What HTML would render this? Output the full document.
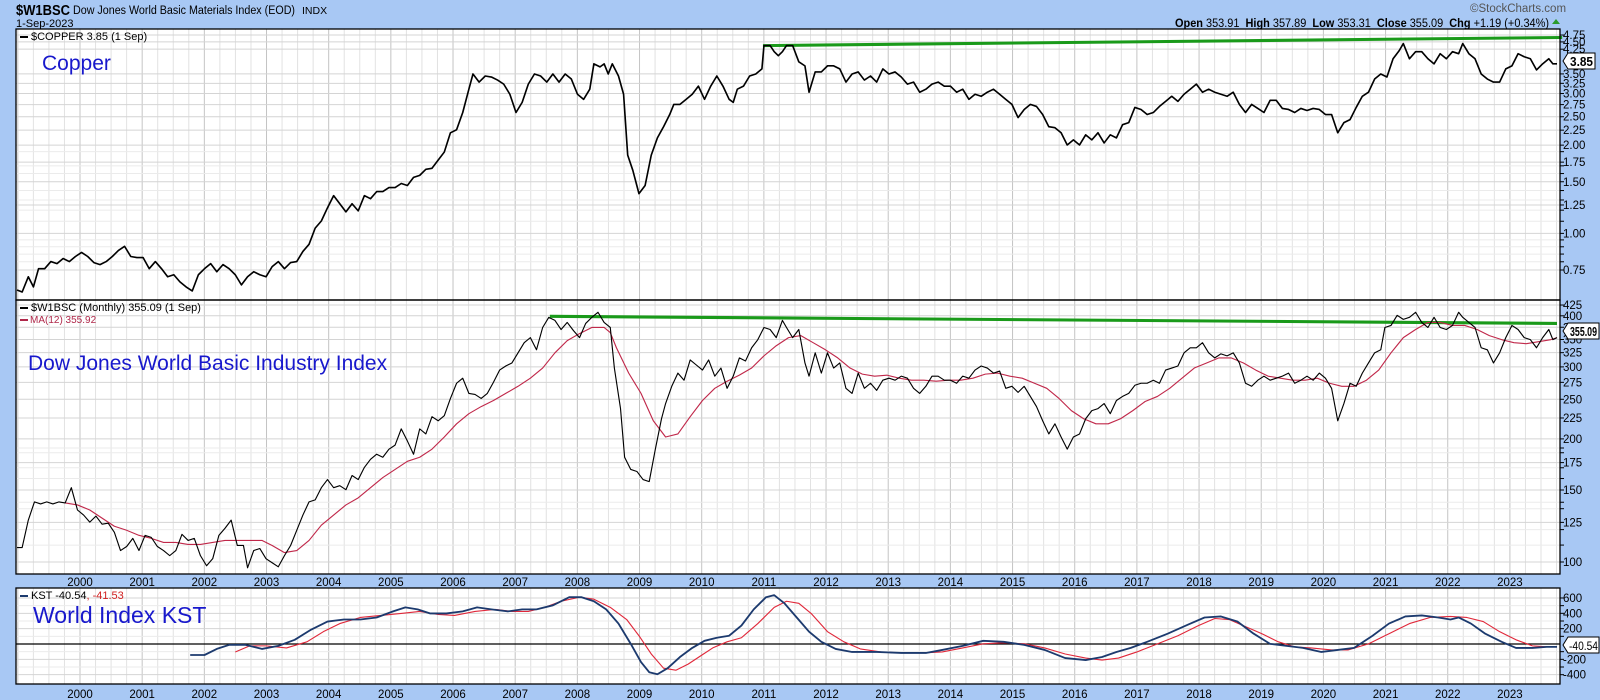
<!DOCTYPE html>
<html><head><meta charset="utf-8"><style>
html,body{margin:0;padding:0;background:#a8c8f4;width:1600px;height:700px;overflow:hidden}
svg{display:block}
text{font-family:"Liberation Sans",sans-serif}
</style></head><body>
<svg id="s" width="1600" height="700" xmlns="http://www.w3.org/2000/svg">
<rect x="0" y="0" width="1600" height="700" fill="#a8c8f4"/>
<g id="panels"></g>
<g id="grid"></g>
<g id="data" transform="matrix(1.0246,0,0,1.014,-0.39,3)" fill="none" stroke-linejoin="round">
<polyline stroke="#1a9a1a" stroke-width="3" points="745,42 1525,34"/>
<polyline stroke="#1a9a1a" stroke-width="3" points="537,309 1520,316"/>
<polyline id="cu" stroke="#000" stroke-width="1.6" points="17,283 22,285 28,270 33,280 38,262 44,262 50,255 56,257 62,252 68,255 74,250 80,246 86,250 92,256 98,258 104,255 110,250 116,244 122,240 128,250 134,251 140,251 146,262 152,255 158,262 164,270 170,268 176,275 182,280 188,284 194,268 200,262 206,257 212,265 218,258 224,262 230,268 236,278 242,270 248,265 254,268 260,270 266,260 272,255 278,262 284,256 290,255 296,245 302,238 308,222 314,215 320,202 326,190 332,198 338,206 344,198 350,205 356,190 362,193 368,186 374,186 380,182 386,182 392,178 398,180 404,172 410,170 416,164 422,163 428,155 434,147 440,128 446,125 452,108 458,85 462,70 468,78 474,72 480,73 486,76 492,80 498,90 504,108 510,98 516,80 522,70 528,72 534,78 540,70 546,78 552,70 558,75 564,90 570,95 576,85 580,60 586,63 590,60 594,70 598,60 604,72 609,90 613,150 618,165 624,188 630,180 636,150 642,133 648,122 654,110 658,100 664,100 670,95 676,90 682,82 688,95 694,82 700,72 706,82 712,95 716,98 720,85 726,82 732,72 738,70 744,65 746,42 752,42 756,48 760,52 764,48 768,42 774,42 780,58 786,62 790,88 796,68 802,68 808,62 814,62 820,65 826,78 832,70 838,68 844,76 850,72 856,78 862,65 868,70 874,68 880,73 886,80 892,78 898,88 904,85 910,80 916,78 922,82 928,82 934,88 940,85 946,95 952,90 958,92 964,88 970,85 976,90 982,95 988,100 994,113 1000,105 1006,100 1012,102 1018,110 1024,122 1030,123 1036,128 1042,140 1048,135 1054,140 1060,130 1066,135 1072,128 1078,138 1084,130 1090,133 1096,120 1102,118 1108,103 1114,105 1120,110 1126,108 1132,102 1138,97 1144,92 1150,97 1156,90 1162,85 1168,80 1174,88 1180,85 1186,88 1192,90 1198,92 1204,88 1210,100 1216,108 1222,100 1228,104 1234,108 1240,96 1246,96 1252,104 1258,105 1264,108 1270,104 1276,106 1282,104 1288,105 1294,110 1300,110 1306,128 1312,118 1318,115 1324,103 1330,92 1336,88 1342,75 1348,70 1354,73 1360,55 1366,47 1370,40 1376,55 1382,48 1388,48 1394,55 1400,60 1406,50 1412,55 1418,48 1424,50 1428,40 1434,50 1440,55 1446,70 1452,75 1458,78 1464,78 1470,65 1476,62 1482,50 1488,53 1494,55 1500,66 1506,60 1512,55 1516,60 1520,60"/>
<polyline stroke="#c0284a" stroke-width="1.1" points="64,493 76,495 88,500 100,508 112,516 124,520 136,525 148,528 160,532 172,532 184,534 196,534 208,532 220,530 232,530 244,530 256,530 266,535 278,542 290,540 302,530 314,515 326,505 338,495 350,488 362,478 374,468 386,460 398,452 410,448 422,440 434,428 446,415 458,405 470,398 482,392 494,385 506,378 518,370 530,360 542,345 554,333 566,326 578,320 590,320 596,325 602,340 614,365 626,385 638,412 650,428 662,425 674,408 686,392 698,380 710,373 722,367 734,360 746,348 758,338 770,330 782,328 794,335 806,342 818,350 830,360 842,366 854,368 866,367 878,370 890,372 902,372 914,373 926,372 938,372 950,370 962,366 974,365 986,368 998,370 1010,375 1022,380 1034,390 1046,402 1058,410 1070,415 1082,415 1094,410 1106,402 1118,393 1130,388 1142,380 1154,370 1166,360 1178,355 1190,350 1202,350 1214,355 1226,362 1238,368 1250,370 1262,372 1274,372 1286,370 1298,375 1310,378 1322,378 1334,372 1346,362 1358,345 1370,330 1382,322 1394,315 1406,315 1418,318 1430,318 1442,322 1454,328 1466,332 1478,335 1490,336 1502,334 1514,332 1520,330"/>
<polyline stroke="#000" stroke-width="1.1" points="17,537 22,537 28,510 34,492 40,494 46,492 52,494 58,492 64,493 70,478 76,500 82,505 88,512 94,506 100,514 106,513 112,522 118,540 124,536 130,528 136,540 142,525 148,527 154,536 160,540 166,545 172,540 178,524 184,530 190,528 196,545 202,555 208,548 214,525 220,518 226,510 232,535 238,535 242,557 248,540 254,538 260,548 266,552 272,556 278,545 284,535 290,520 296,505 302,492 308,490 314,478 320,470 326,478 332,476 338,480 344,466 350,470 356,458 362,450 368,445 374,448 380,440 386,436 392,420 398,432 404,445 410,420 416,425 422,408 428,412 434,407 440,390 446,375 452,370 458,385 464,386 470,390 476,385 482,374 488,362 494,358 500,355 506,345 512,335 518,330 524,342 530,320 536,310 542,313 548,322 554,315 560,323 566,330 572,316 578,310 584,305 590,315 596,320 600,360 606,400 610,448 616,460 622,462 628,470 634,472 640,440 646,410 650,395 656,378 662,365 668,372 674,352 680,357 686,362 692,352 698,368 704,360 710,380 716,368 722,350 728,353 734,340 740,332 746,320 752,322 758,330 764,313 768,320 774,330 780,322 786,355 790,368 796,345 802,365 808,345 814,360 820,355 826,380 832,385 838,365 844,380 850,375 856,382 862,372 868,370 874,372 880,368 886,370 892,380 898,385 904,378 910,368 916,368 922,372 928,372 934,375 940,368 946,370 952,362 958,358 964,360 970,365 976,363 982,380 988,378 994,384 1000,378 1006,388 1012,398 1018,412 1024,425 1030,415 1036,428 1042,440 1048,428 1054,425 1060,410 1066,402 1072,400 1078,395 1084,405 1090,392 1096,388 1102,385 1108,377 1114,375 1120,375 1126,372 1132,375 1138,362 1144,360 1150,358 1156,345 1162,340 1168,340 1174,335 1180,345 1186,350 1192,346 1198,348 1204,345 1210,355 1216,375 1222,378 1228,372 1234,368 1240,372 1246,370 1252,368 1258,365 1264,375 1270,372 1276,368 1282,372 1288,365 1294,370 1300,380 1306,412 1312,395 1318,375 1324,378 1330,365 1336,355 1342,345 1348,342 1352,320 1358,318 1364,308 1370,312 1376,310 1382,305 1388,315 1394,320 1400,310 1406,320 1412,322 1418,318 1424,305 1428,310 1434,315 1440,320 1446,340 1452,342 1458,355 1464,345 1470,330 1476,318 1482,322 1488,330 1494,332 1500,340 1506,330 1512,322 1516,332 1520,330"/>
<polyline stroke="#e0283a" stroke-width="1.1" points="230,640 244,634 260,634 280,636 300,630 316,620 332,612 352,606 372,604 392,602 410,600 428,603 444,604 464,600 484,598 500,600 516,600 532,596 548,590 566,586 580,588 596,596 612,608 624,624 636,642 648,656 660,658 672,652 684,644 696,636 710,630 724,626 740,612 756,596 768,590 780,592 792,602 808,620 824,630 840,637 860,640 880,641 900,641 920,640 940,636 960,632 980,631 1000,632 1020,636 1040,642 1060,646 1076,648 1092,646 1110,640 1130,632 1150,624 1170,614 1186,607 1200,608 1216,615 1232,622 1248,630 1264,635 1280,636 1300,638 1316,638 1336,632 1356,622 1376,612 1396,606 1416,605 1432,606 1448,610 1464,620 1480,628 1496,634 1512,635 1520,635"/>
<polyline stroke="#1c3a6e" stroke-width="1.8" points="186,643 200,643 212,637 224,633 240,633 256,637 272,634 288,628 304,618 320,610 336,608 352,608 368,606 384,600 396,596 408,598 420,602 436,602 452,600 466,596 480,598 496,600 510,598 524,598 540,594 556,586 568,586 580,590 592,598 604,612 616,632 626,650 634,660 642,662 652,656 664,645 676,636 688,629 700,626 712,624 724,614 736,598 748,586 756,584 766,592 778,606 790,620 802,630 816,637 832,640 856,640 880,641 904,641 920,638 940,634 960,629 980,630 1000,633 1020,638 1040,646 1060,648 1076,645 1090,640 1104,636 1120,630 1140,622 1160,613 1176,606 1192,605 1208,610 1224,622 1240,632 1256,634 1272,636 1290,640 1306,638 1322,636 1340,624 1356,612 1372,605 1388,604 1404,606 1416,608 1424,606 1436,612 1450,622 1466,630 1480,636 1496,636 1510,635 1520,635"/>
</g>
<g id="txt"></g>
</svg>
<script>
var NS="http://www.w3.org/2000/svg";
function el(p,t,a,tx){var e=document.createElementNS(NS,t);for(var k in a)e.setAttribute(k,a[k]);if(tx!=null)e.textContent=tx;p.appendChild(e);return e;}
var P=document.getElementById('panels'),G=document.getElementById('grid'),T=document.getElementById('txt');
var L=16,R=1560;
var panels=[[29,300],[300,574],[588,684]];
panels.forEach(function(p){el(P,'rect',{x:L,y:p[0],width:R-L,height:p[1]-p[0],fill:'#fff'});});
function xy(Y){return 80+62.17*(Y-2000);}
for(var Y=1999;Y<=2024;Y+=0.25){var x=xy(Y);if(x<=L||x>=R)continue;var maj=Math.abs(Y-Math.round(Y))<0.01;
panels.forEach(function(p){el(G,'line',{x1:x,x2:x,y1:p[0],y2:p[1],stroke:maj?'#c4c4c4':'#e2e2e2','stroke-width':1});});}
function hline(y,y0,y1,lab,maj){if(y<=y0||y>=y1)return;el(G,'line',{x1:L,x2:R,y1:y,y2:y,stroke:maj?'#d4d4d4':'#ebebeb'});
el(G,'line',{x1:R,x2:R+4,y1:y,y2:y,stroke:'#000'});
if(lab)el(T,'text',{x:R+3,y:y+4,'font-size':11.5,fill:'#000'},lab);}
function cy(v){return 270-127.3*Math.log(v/0.75);}
[0.75,1,1.25,1.5,1.75,2,2.25,2.5,2.75,3,3.25,3.5,4.25,4.5,4.75].forEach(function(v){hline(cy(v),29,300,v.toFixed(2),true);});
[0.8,0.85,0.9,0.95,1.1,1.2,1.3,1.4,1.6,1.7,1.9].forEach(function(v){hline(cy(v),29,300,null,false);});
function wy(v){return 562-177.6*Math.log(v/100);}
for(var v=100;v<=425;v+=25)hline(wy(v),300,574,String(v),true);
[110,120,135,140,160,170,185,190].forEach(function(v){hline(wy(v),300,574,null,false);});
function ky(v){return 644-0.0767*v;}
[600,400,200,-200,-400].forEach(function(v){hline(ky(v),588,684,String(v),true);});
[500,300,100,-100,-300].forEach(function(v){hline(ky(v),588,684,null,false);});
el(G,'line',{x1:L,x2:R,y1:644,y2:644,stroke:'#000','stroke-width':1.2});
panels.forEach(function(p){el(T,'rect',{x:L,y:p[0],width:R-L,height:p[1]-p[0],fill:'none',stroke:'#000','stroke-width':1.3});});
[582,694].forEach(function(yy){for(var Y=2000;Y<=2023;Y++)el(T,'text',{x:xy(Y),y:yy+4,'font-size':11.5,'text-anchor':'middle'},String(Y));});
el(T,'text',{x:16,y:15,'font-size':14.5,'font-weight':'bold',textLength:54,lengthAdjust:'spacingAndGlyphs'},'$W1BSC');
el(T,'text',{x:73,y:14,'font-size':11.5,textLength:222,lengthAdjust:'spacingAndGlyphs'},'Dow Jones World Basic Materials Index (EOD)');
el(T,'text',{x:302,y:14,'font-size':10.5},'INDX');
el(T,'text',{x:16,y:27,'font-size':11},'1-Sep-2023');
el(T,'text',{x:1470,y:12,'font-size':11.5,fill:'#555'},'\u00a9StockCharts.com');
var h=el(T,'text',{x:1175,y:27,'font-size':11.5,textLength:374,lengthAdjust:'spacingAndGlyphs'});
h.innerHTML='<tspan font-weight="bold">Open</tspan> 353.91  <tspan font-weight="bold">High</tspan> 357.89  <tspan font-weight="bold">Low</tspan> 353.31  <tspan font-weight="bold">Close</tspan> 355.09  <tspan font-weight="bold">Chg</tspan> +1.19 (+0.34%)';
h.style.whiteSpace='pre';
el(T,'polygon',{points:'1552,24 1560,24 1556,19',fill:'#2a9a2a'});
el(T,'rect',{x:20,y:36,width:8,height:2,fill:'#000'});
el(T,'text',{x:31,y:40,'font-size':11,'font-family':'Liberation Mono'},'$COPPER 3.85 (1 Sep)');
el(T,'rect',{x:20,y:307,width:8,height:2,fill:'#000'});
el(T,'text',{x:31,y:311,'font-size':11,'font-family':'Liberation Mono'},'$W1BSC (Monthly) 355.09 (1 Sep)');
el(T,'rect',{x:20,y:319,width:8,height:2,fill:'#b0284a'});
el(T,'text',{x:30,y:323,'font-size':10,fill:'#b0284a'},'MA(12) 355.92');
el(T,'rect',{x:20,y:595,width:8,height:2,fill:'#1c3a6e'});
var k=el(T,'text',{x:31,y:599,'font-size':11,'font-family':'Liberation Mono'});
k.innerHTML='KST -40.54<tspan fill="#d02020">, -41.53</tspan>';
el(T,'text',{x:42,y:70,'font-size':21,fill:'#1818cc'},'Copper');
el(T,'text',{x:28,y:370,'font-size':21,fill:'#1818cc'},'Dow Jones World Basic Industry Index');
el(T,'text',{x:33,y:623,'font-size':23,fill:'#1818cc'},'World Index KST');
function box(y,t,w){el(T,'polygon',{points:(R+3)+','+y+' '+(R+8)+','+(y-8)+' '+(R+8+w)+','+(y-8)+' '+(R+8+w)+','+(y+8)+' '+(R+8)+','+(y+8),fill:'#fff',stroke:'#000'});
el(T,'text',{x:R+10,y:y+5,'font-size':12.5,'font-weight':'bold',textLength:w-4,lengthAdjust:'spacingAndGlyphs'},t);}
box(61,'3.85',27);box(331,'355.09',31);
el(T,'polygon',{points:(R+3)+',645 '+(R+8)+',637 '+(R+39)+',637 '+(R+39)+',653 '+(R+8)+',653',fill:'#fff',stroke:'#000'});
el(T,'text',{x:R+9,y:650,'font-size':12,textLength:29,lengthAdjust:'spacingAndGlyphs'},'-40.54');
</script>
</body></html>
